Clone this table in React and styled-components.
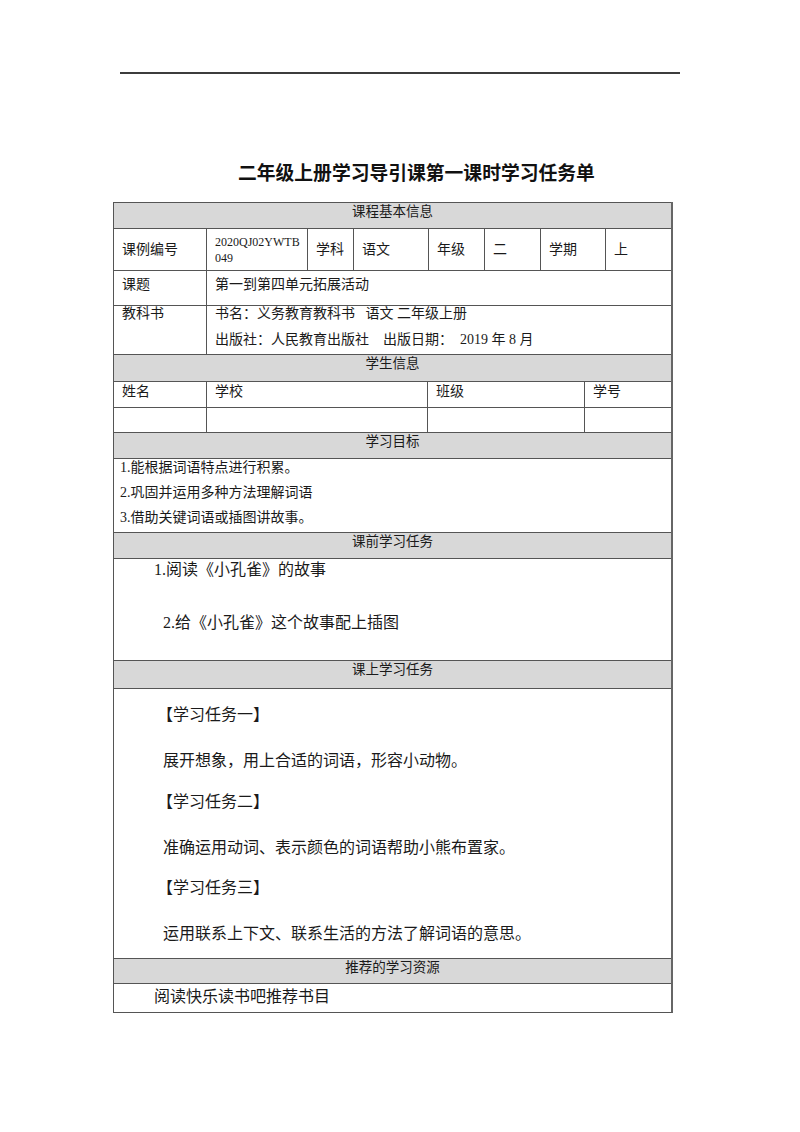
import React from 'react';
import styled, { createGlobalStyle } from 'styled-components';

const GlobalStyle = createGlobalStyle`
  body {
    margin: 0;
    background: #fff;
    font-family: "Liberation Serif", "Noto Sans CJK SC", serif;
    color: #1a1a1a;
  }
`;

const Page = styled.div`
  width: 800px;
  min-height: 1132px;
  padding-top: 72px;
  box-sizing: border-box;
`;

const Rule = styled.div`
  width: 560px;
  height: 2px;
  margin-left: 120px;
  background: #3c3c3c;
`;

const Title = styled.h1`
  margin: 86px 0 0 238px;
  font-family: "Noto Sans CJK SC", sans-serif;
  font-size: 18.8px;
  font-weight: bold;
  line-height: 24px;
  color: #111;
`;

const Sheet = styled.div`
  width: 560px;
  margin: 18px 0 0 113px;
  box-sizing: border-box;
  border-left: 1px solid #555;
  border-right: 2px solid #666;
  border-bottom: 1px solid #555;
`;

const Row = styled.div`
  display: grid;
  grid-template-columns: ${p => p.$cols || '1fr'};
  height: ${p => p.$h}px;
  box-sizing: border-box;
  border-top: 1px solid #555;
  background: #fff;
`;

const SectionHead = styled.div`
  height: ${p => p.$h}px;
  box-sizing: border-box;
  border-top: 1px solid #555;
  background: #d8d8d8;
  text-align: center;
  font-size: 13.5px;
  line-height: 18px;
`;

const Cell = styled.div`
  box-sizing: border-box;
  padding: ${p => p.$top || 0}px 4px 0 8px;
  font-size: ${p => p.$size || 14}px;
  line-height: ${p => p.$lh || 20}px;
  display: flex;
  flex-direction: column;
  justify-content: ${p => (p.$middle ? 'center' : 'flex-start')};
  white-space: pre;

  & + & {
    border-left: 1px solid #555;
  }
`;

const BookLine = styled.div`
  & + & {
    margin-top: 10px;
  }
`;

const Body = styled.div`
  box-sizing: border-box;
  border-top: 1px solid #555;
  height: ${p => p.$h}px;
  padding-top: ${p => p.$top || 0}px;
`;

const Goal = styled.div`
  padding-left: 6px;
  font-size: 14px;
  line-height: 18px;

  & + & {
    margin-top: 7px;
  }
`;

const PreTask = styled.div`
  padding-left: ${p => p.$indent}px;
  font-size: 16px;
  line-height: 20px;

  & + & {
    margin-top: 33px;
  }
`;

const TaskHeading = styled.div`
  padding-left: 157px;
  margin-left: -114px;
  font-size: 16px;
  line-height: 20px;
  margin-bottom: 26px;
`;

const TaskText = styled.div`
  padding-left: 49px;
  font-size: 16px;
  line-height: 20px;
  margin-bottom: 20.5px;
`;

const Resource = styled.div`
  padding-left: 40px;
  font-size: 16px;
  line-height: 20px;
`;

const infoCols = '92px 101px 46px 75px 56px 56px 65px 66px';
const studentCols = '92px 221px 157px 87px';
const pairCols = '92px 1fr';

const tasks = [
  ['【学习任务一】', '展开想象，用上合适的词语，形容小动物。'],
  ['【学习任务二】', '准确运用动词、表示颜色的词语帮助小熊布置家。'],
  ['【学习任务三】', '运用联系上下文、联系生活的方法了解词语的意思。'],
];

export default function App() {
  return (
    <Page>
      <GlobalStyle />
      <Rule />
      <Title>二年级上册学习导引课第一课时学习任务单</Title>
      <Sheet>
        <SectionHead $h={26}>课程基本信息</SectionHead>
        <Row $cols={infoCols} $h={42}>
          <Cell $middle>课例编号</Cell>
          <Cell $middle $size={12} $lh={16}>
            {'2020QJ02YWTB'}
            <br />
            {'049'}
          </Cell>
          <Cell $middle>学科</Cell>
          <Cell $middle>语文</Cell>
          <Cell $middle>年级</Cell>
          <Cell $middle>二</Cell>
          <Cell $middle>学期</Cell>
          <Cell $middle>上</Cell>
        </Row>
        <Row $cols={pairCols} $h={35}>
          <Cell $top={4}>课题</Cell>
          <Cell $top={4}>第一到第四单元拓展活动</Cell>
        </Row>
        <Row $cols={pairCols} $h={49}>
          <Cell $lh={16}>教科书</Cell>
          <Cell $lh={16}>
            <BookLine>书名：义务教育教科书   语文 二年级上册</BookLine>
            <BookLine>出版社：人民教育出版社    出版日期：  2019 年 8 月</BookLine>
          </Cell>
        </Row>
        <SectionHead $h={27}>学生信息</SectionHead>
        <Row $cols={studentCols} $h={26}>
          <Cell>姓名</Cell>
          <Cell>学校</Cell>
          <Cell>班级</Cell>
          <Cell>学号</Cell>
        </Row>
        <Row $cols={studentCols} $h={25}>
          <Cell />
          <Cell />
          <Cell />
          <Cell />
        </Row>
        <SectionHead $h={26}>学习目标</SectionHead>
        <Body $h={74}>
          <Goal>1.能根据词语特点进行积累。</Goal>
          <Goal>2.巩固并运用多种方法理解词语</Goal>
          <Goal>3.借助关键词语或插图讲故事。</Goal>
        </Body>
        <SectionHead $h={26}>课前学习任务</SectionHead>
        <Body $h={102} $top={1}>
          <PreTask $indent={40}>1.阅读《小孔雀》的故事</PreTask>
          <PreTask $indent={49}>2.给《小孔雀》这个故事配上插图</PreTask>
        </Body>
        <SectionHead $h={28}>课上学习任务</SectionHead>
        <Body $h={270} $top={16}>
          {tasks.map(([head, text]) => (
            <React.Fragment key={head}>
              <TaskHeading>{head}</TaskHeading>
              <TaskText>{text}</TaskText>
            </React.Fragment>
          ))}
        </Body>
        <SectionHead $h={25}>推荐的学习资源</SectionHead>
        <Body $h={29} $top={3}>
          <Resource>阅读快乐读书吧推荐书目</Resource>
        </Body>
      </Sheet>
    </Page>
  );
}
